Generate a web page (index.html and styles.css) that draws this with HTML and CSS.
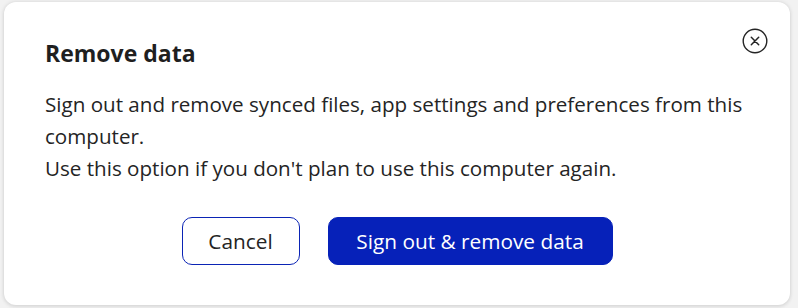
FILE: index.html
```html
<!DOCTYPE html>
<html lang="en">
<head>
<meta charset="utf-8">
<title>Remove data</title>
<link rel="stylesheet" href="styles.css">
</head>
<body>
<div class="dialog">
  <button class="close" aria-label="Close">
    <svg width="26" height="26" viewBox="0 0 26 26"><circle cx="13" cy="13" r="11.8" fill="none" stroke="#242424" stroke-width="1.4"/><path d="M9.3 9.3L16.7 16.7M16.7 9.3L9.3 16.7" stroke="#242424" stroke-width="1.5" stroke-linecap="round"/></svg>
  </button>
  <h1 class="title">Remove data</h1>
  <div class="body">
    <p>Sign out and remove synced files, app settings and preferences from this computer.</p>
    <p>Use this option if you don't plan to use this computer again.</p>
  </div>
  <div class="actions">
    <button class="btn btn-secondary">Cancel</button>
    <button class="btn btn-primary">Sign out &amp; remove data</button>
  </div>
</div>
</body>
</html>
```

FILE: styles.css
```css
html, body {
  margin: 0;
  padding: 0;
}
body {
  background: #f2f2f2;
  width: 798px;
  height: 308px;
  overflow: hidden;
  font-family: "Open Sans", "Noto Sans", sans-serif;
  color: #242424;
}
.dialog {
  position: relative;
  box-sizing: border-box;
  margin: 2px 0 0 4px;
  width: 786px;
  height: 303px;
  background: #ffffff;
  border-radius: 12px;
  box-shadow: 0 0 4px rgba(0,0,0,0.12), 0 2px 4px rgba(0,0,0,0.06);
  padding: 35px 40px 0 41px;
}
.close {
  position: absolute;
  top: 26px;
  right: 22px;
  width: 26px;
  height: 26px;
  padding: 0;
  border: 0;
  background: none;
  display: flex;
}
.title {
  margin: 0;
  font-size: 23px;
  font-weight: 700;
  line-height: 32px;
  color: #1f1f1f;
}
.body {
  margin-top: 19px;
  font-size: 20.6px;
  line-height: 32px;
}
.body p {
  margin: 0;
}
.actions {
  display: flex;
  justify-content: center;
  gap: 28px;
  margin-top: 33px;
  margin-left: -41px;
  margin-right: -40px;
}
.btn {
  font-family: inherit;
  font-size: 20.8px;
  height: 48px;
  border-radius: 10px;
  box-sizing: border-box;
  cursor: pointer;
  padding: 0;
}
.btn-secondary {
  width: 118px;
  background: #ffffff;
  color: #242424;
  border: 1px solid #0b24b5;
}
.btn-primary {
  width: 285px;
  background: #0621b9;
  color: #ffffff;
  border: 1px solid #0621b9;
}
```
